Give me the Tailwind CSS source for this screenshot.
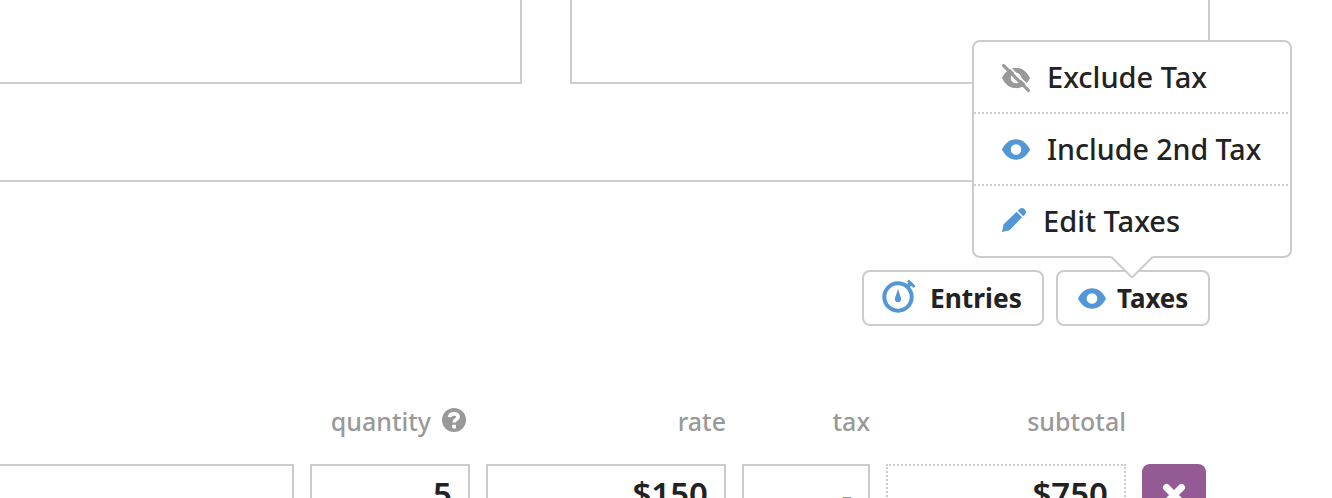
<!DOCTYPE html>
<html lang="en">
<head>
<meta charset="utf-8">
<title>Invoice</title>
<script src="https://cdn.jsdelivr.net/npm/@tailwindcss/browser@4"></script>
</head>
<body class="bg-white text-[#222] font-['Noto_Sans',sans-serif]">
<svg class="hidden">
  <symbol id="eye" viewBox="0 0 28 21"><path fill="currentColor" fill-rule="evenodd" d="M0 10.5C3 4 8 .2 14 .2S25 4 28 10.5C25 17 20 20.8 14 20.8S3 17 0 10.5ZM14 5.2a5.3 5.3 0 1 0 0 10.6a5.3 5.3 0 1 0 0-10.6Z"/></symbol>
</svg>
<main class="relative w-[1332px] h-[498px] overflow-hidden flex flex-col">
  <section class="shrink-0 h-[182px] w-[1210px] border-b-2 border-[#ccc]">
    <div class="flex gap-12 h-[84px]">
      <div class="w-[522px] border-r-2 border-b-2 border-[#ccc]"></div>
      <div class="w-[640px] border-x-2 border-b-2 border-[#ccc]"></div>
    </div>
  </section>

  <div class="shrink-0 flex w-[1210px] justify-end gap-3 mt-[88px] h-14 text-[27px] font-bold">
    <button class="flex items-center w-[182px] border-2 border-[#ccc] rounded-lg pl-[18px]">
      <svg class="w-[34px] h-[34px] shrink-0 -mt-1" viewBox="0 0 34 34" fill="none" stroke="#5397d7"><circle cx="16" cy="18" r="13.7" stroke-width="4"/><path d="M24.5 8.5l4-4" stroke-width="4"/><path d="M26 1.5l6.5 6.5" stroke-width="2.8"/><path d="M16 10l3 9a3.2 3.2 0 1 1-6 0Z" fill="#5397d7" stroke="none"/></svg>
      <span class="ml-[14px] leading-9 whitespace-nowrap origin-left scale-x-[.975]">Entries</span>
    </button>
    <button class="flex items-center w-[154px] border-2 border-[#ccc] rounded-lg pl-5">
      <svg class="w-7 h-[21px] shrink-0 mt-px text-[#5397d7]"><use href="#eye"/></svg>
      <span class="ml-[11px] leading-9 whitespace-nowrap origin-left scale-x-[.96]">Taxes</span>
    </button>
  </div>

  <section class="shrink-0 mt-[74px] grid grid-cols-[294px_160px_240px_128px_240px_64px] gap-x-4 text-right font-medium">
    <div class="h-16"></div>
    <div class="flex justify-end items-start text-[25px] leading-[42px] text-[#999]"><span>quantity</span>
      <svg class="w-6 h-6 mt-2 ml-[11px] mr-1 shrink-0" viewBox="0 0 24 24"><circle cx="12" cy="12" r="12" fill="#999"/><path d="M7.6 9.2C7.8 6.9 9.6 5.9 12 5.9c2.5 0 4.1 1.1 4.1 3 0 2.7-4 2.6-4 5.6" fill="none" stroke="#fff" stroke-width="3.6"/><rect x="10.2" y="16.8" width="3.8" height="3.6" rx="1" fill="#fff"/></svg>
    </div>
    <div class="text-[25px] leading-[42px] text-[#999]">rate</div>
    <div class="text-[25px] leading-[42px] text-[#999]">tax</div>
    <div class="text-[25px] leading-[42px] text-[#999]">subtotal</div>
    <div></div>
    <div class="h-16 border-2 border-l-0 border-[#ccc]"></div>
    <div class="h-16 border-2 border-[#ccc] pr-4 text-[33px] font-semibold leading-[56px]">5</div>
    <div class="h-16 border-2 border-[#ccc] pr-4 text-[33px] font-semibold leading-[56px]">$150</div>
    <div class="h-16 border-2 border-[#ccc] pr-4 text-[33px] leading-[58px] text-[#999]">-</div>
    <div class="h-16 border-2 border-dotted border-[#ccc] pr-4 text-[33px] font-semibold leading-[56px]">$750</div>
    <button class="h-16 rounded-lg bg-[#935a93] flex justify-center pt-[19px]">
      <svg class="w-6 h-6" viewBox="0 0 24 24"><path d="M4.5 4.5l15 15M19.5 4.5l-15 15" stroke="#fff" stroke-width="7" stroke-linecap="round"/></svg>
    </button>
  </section>

  <div class="absolute left-[972px] top-10 w-80 h-[218px] bg-white border-2 border-[#ccc] rounded-lg text-[29px] font-medium">
    <div class="flex items-center h-[72px] pl-7 border-b-2 border-dotted border-[#ccc] mr-0.5">
      <svg class="w-7 h-7 shrink-0 mt-0.5" viewBox="0 0 28 28"><svg y="3.5" width="28" height="21" class="text-[#999]"><use href="#eye"/></svg><path d="M3.2-1.2L29.2 24.8" stroke="#fff" stroke-width="1.6"/><path d="M1.6 1.6l24.8 24.8" stroke="#999" stroke-width="3.2" stroke-linecap="round"/></svg>
      <span class="ml-[17px] whitespace-nowrap">Exclude Tax</span>
    </div>
    <div class="flex items-center h-[72px] pl-7 border-b-2 border-dotted border-[#ccc] mr-0.5">
      <svg class="w-7 h-[21px] shrink-0 text-[#5397d7]"><use href="#eye"/></svg>
      <span class="ml-[17px] whitespace-nowrap origin-left scale-x-[.985]">Include 2nd Tax</span>
    </div>
    <div class="flex items-center h-[70px] pl-7">
      <svg class="w-6 h-6 shrink-0 -mt-0.5" viewBox="0 0 24 24" fill="#5397d7"><path d="M0 24L1.6 16.2 14.6 3.8 20 9.2 7.6 22.2Z"/><path d="M15.8 2.8L17.2 1.4A4 4 0 0 1 22.7 1.4A4 4 0 0 1 22.7 6.9L21.2 8.3Z"/></svg>
      <span class="ml-[17px] whitespace-nowrap">Edit Taxes</span>
    </div>
    <svg class="absolute left-[137px] top-[213px] w-[42px] h-[24px]" viewBox="0 0 42 24"><path d="M0 0H42V1L40.5 2.5 21 21.8 1.5 2.5 0 1Z" fill="#fff"/><path d="M.5 2L19.7 21.2Q21 22.5 22.3 21.2L41.5 2" fill="none" stroke="#ccc" stroke-width="2"/></svg>
  </div>
</main>
</body>
</html>
